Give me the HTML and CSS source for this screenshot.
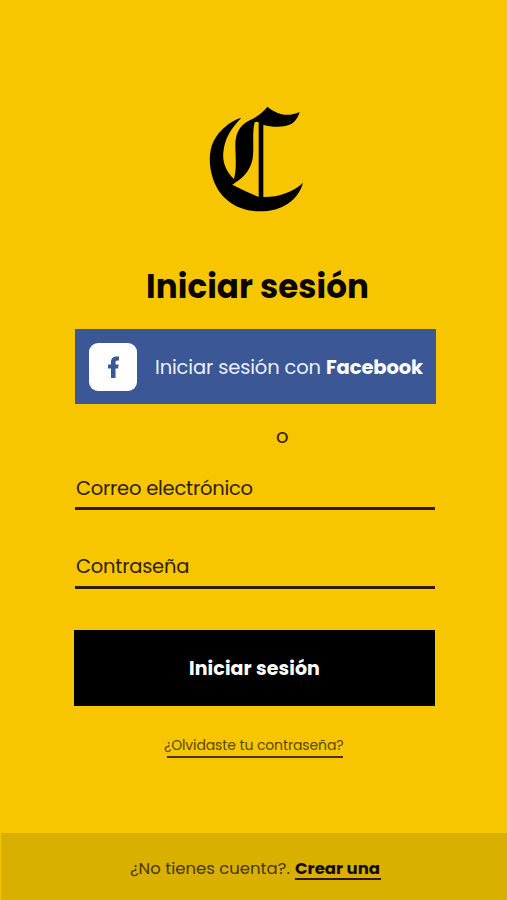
FILE: index.html
```html
<!DOCTYPE html>
<html lang="es">
<head>
<meta charset="utf-8">
<meta name="viewport" content="width=device-width, initial-scale=1">
<title>Iniciar sesión</title>
<link rel="stylesheet" href="styles.css">
</head>
<body>
<main class="login">
  <svg class="logo" viewBox="0 0 336 360" aria-hidden="true">
    <path d="M124 53C94 61 58 89 41 123C27 151 26 190 36 226C52 293 111 335 178 334C248 334 295 300 309 248C281 276 233 292 190 291V74C218 83 257 82 275 71C289 62 295 49 299 36C267 50 237 48 202 20C189 38 170 51 149 61C114 78 105 107 106 143C107 175 110 207 102 237C78 215 67 187 70 157C73 119 91 87 124 53ZM164 67Q170 63 176 67V291Q138 275 97 254C126 236 148 217 157 181C164 146 155 103 164 67Z"/>
  </svg>
  <h1 class="title">Iniciar sesión</h1>
  <button class="facebook" type="button">
    <span class="facebook-icon">
      <svg viewBox="0 0 48 48" aria-hidden="true"><path d="M22 35V25.500H19V21.500H22V19.500C22 15.500 24 13.500 27.500 13.500H30V17.500H28.500C27 17.500 26.500 18.200 26.500 19.500V21.500H29.600L29 25.500H26.500V35Z"/></svg>
    </span>
    <span class="facebook-text">Iniciar sesión con</span>
    <strong class="facebook-name">Facebook</strong>
  </button>
  <p class="or">o</p>
  <div class="field email"><span>Correo electrónico</span></div>
  <div class="field password"><span>Contraseña</span></div>
  <button class="submit" type="button"><span>Iniciar sesión</span></button>
  <a class="forgot"><span>¿Olvidaste tu contraseña?</span></a>
</main>
<footer class="signup">
  <span class="question">¿No tienes cuenta?.</span>
  <a class="create"><span>Crear una</span></a>
</footer>
</body>
</html>
```
FILE: styles.css
```css
* { box-sizing: border-box; }
body {
  margin: 0;
  height: 900px;
  display: flex;
  flex-direction: column;
  overflow: hidden;
  background: #f7c600;
  color: #2f2100;
  font-family: Poppins, Inter, "Liberation Sans", sans-serif;
  font-feature-settings: "cv11", "ss03";
}
span, strong, h1, p { white-space: nowrap; }
.login {
  height: 833px;
  width: 361px;
  margin-left: 75px;
  padding-top: 100px;
  display: flex;
  flex-direction: column;
}
.logo { display: block; width: 112px; height: 120px; margin-left: 125px; fill: #000; }
.title {
  margin: 45px 0 0 71px;
  height: 44px;
  font-size: 32.5px;
  line-height: 44px;
  letter-spacing: 0.1px;
  font-weight: 650;
  color: #0b0700;
}
.facebook {
  width: 361px;
  height: 75px;
  margin-top: 20px;
  padding: 1px 0 0 14px;
  display: flex;
  align-items: center;
  border: 0;
  background: #3b5795;
  color: #e9f1ff;
  font: 400 19.5px Poppins, Inter, sans-serif;
  font-feature-settings: inherit;
}
.facebook-icon { width: 48px; height: 48px; border-radius: 9px; background: #fff; }
.facebook-icon svg { display: block; width: 48px; height: 48px; fill: #3b5795; }
.facebook-text { width: 171px; margin-left: 18px; text-align: left; letter-spacing: -0.15px; }
.facebook-name { color: #fff; font-weight: 750; letter-spacing: -0.1px; }
.or { margin: 19px 0 0 201px; height: 28px; font-size: 19.5px; line-height: 28px; }
.field { width: 360px; border-bottom: 3px solid #2f1c00; font-size: 19.5px; line-height: 30px; letter-spacing: -0.24px; padding-left: 1px; }
.email { height: 36px; margin-top: 23px; }
.password { height: 37px; margin-top: 42px; }
.submit {
  width: 361px;
  height: 76px;
  margin: 41px 0 0 -1px;
  padding-top: 2px;
  border: 0;
  background: #000;
  color: #fff;
  font: 700 19px Poppins, Inter, sans-serif;
  letter-spacing: 0.1px;
  font-feature-settings: inherit;
}
.forgot {
  width: 176px;
  height: 24px;
  margin: 28px 0 0 92px;
  border-bottom: 2px solid #493200;
  color: #604600;
  font-size: 14px;
  line-height: 22px;
  letter-spacing: -0.12px;
}
.forgot span { margin-left: -3px; }
.signup {
  height: 67px;
  margin-left: 1px;
  padding: 23px 0 0 129px;
  display: flex;
  background: #dab000;
  font-size: 16.5px;
  line-height: 26px;
}
.question { width: 165px; color: #4c3700; }
.create { width: 86px; height: 24px; border-bottom: 2px solid #2a1900; color: #160d00; font-weight: 750; }
```
